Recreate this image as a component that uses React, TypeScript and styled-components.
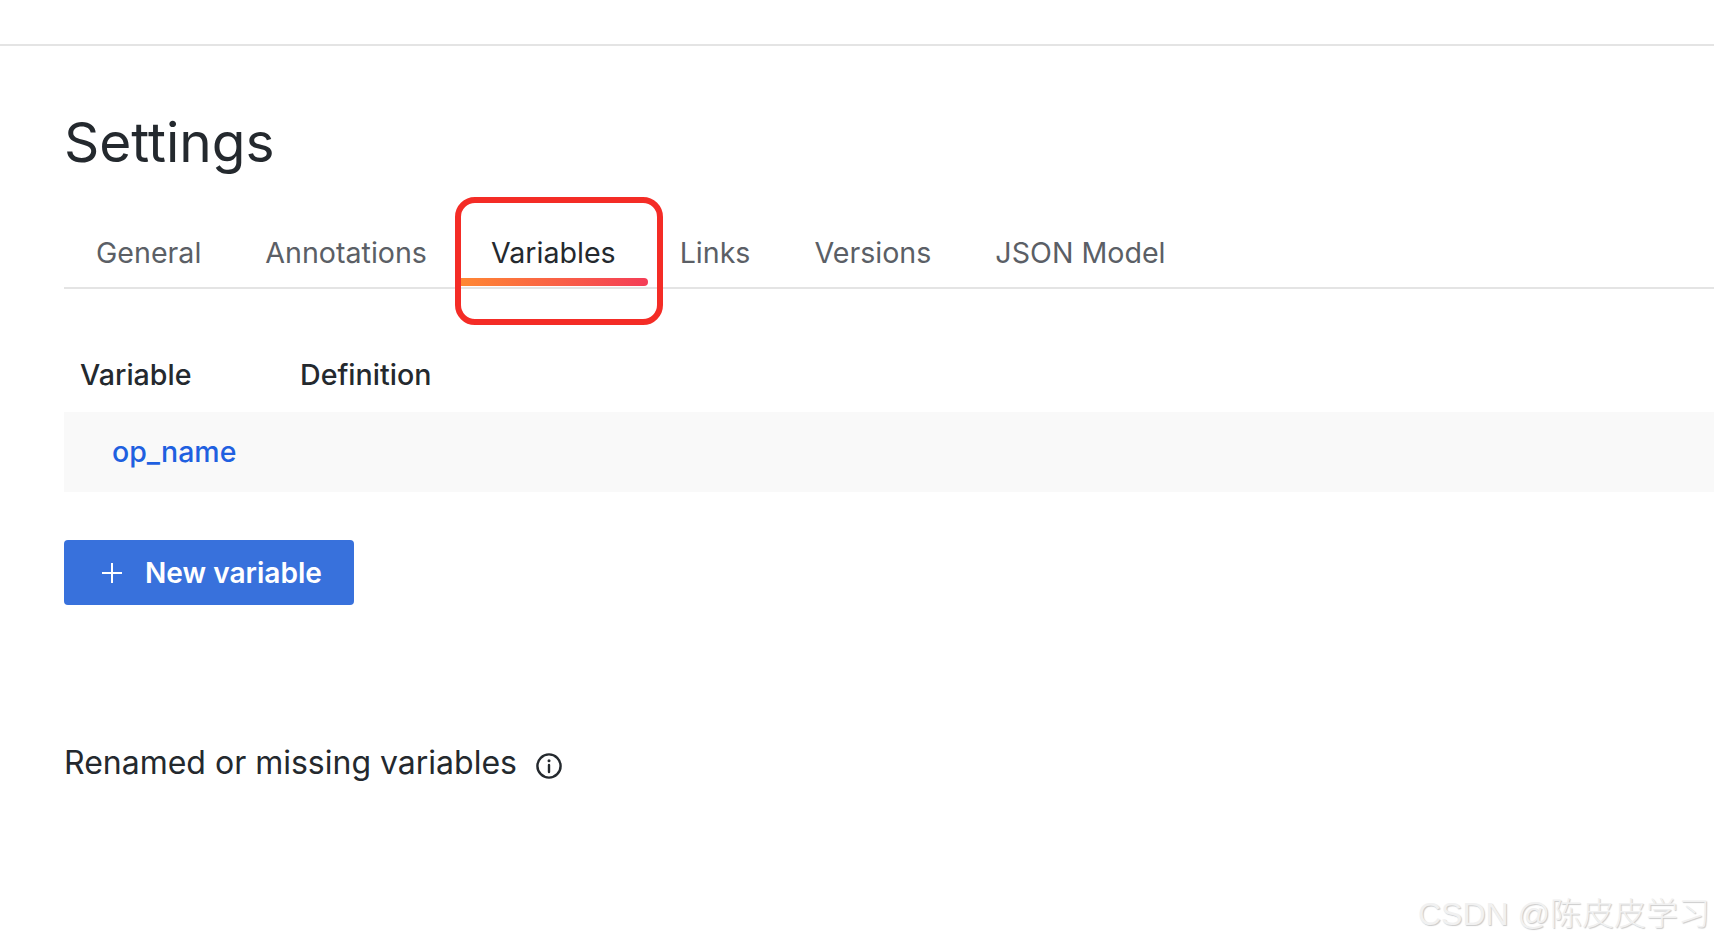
import React from "react";
import styled, { createGlobalStyle } from "styled-components";

const Global = createGlobalStyle`
  html, body { margin: 0; padding: 0; background: #fff; height: 100%; overflow: hidden; }
  body { font-family: Inter, "Liberation Sans", sans-serif; color: #24292e; -webkit-font-smoothing: antialiased; }
`;

const Page = styled.div`
  position: relative;
  height: 944px;
  overflow: hidden;
`;

const TopBar = styled.header`
  height: 44px;
  border-bottom: 2px solid #e4e4e4;
`;

const Content = styled.main`
  padding: 62px 0 0 64px;
`;

const Title = styled.h1`
  margin: 0;
  font-size: 55px;
  line-height: 68px;
  font-weight: 400;
  color: #24292e;
`;

const Tabs = styled.nav`
  display: flex;
  height: 69px;
  margin-top: 42px;
  border-bottom: 2px solid #e4e4e4;
`;

const Tab = styled.div<{ $active?: boolean }>`
  position: relative;
  padding: 17px 32px 0;
  font-size: 28.6px;
  line-height: 36px;
  color: ${(p) => (p.$active ? "#24292e" : "#5b5f66")};
  ${(p) =>
    p.$active &&
    `&::after {
      content: "";
      position: absolute;
      left: 0;
      right: 0;
      bottom: 1px;
      height: 8px;
      border-radius: 0 4px 4px 0;
      background: linear-gradient(90deg, #ff8833, #f43d57);
    }`}
`;

const Table = styled.section`
  margin-top: 67px;
`;

const HeaderRow = styled.div`
  display: flex;
  height: 56px;
  padding: 1px 0 0 16px;
  box-sizing: border-box;
`;

const HeaderCell = styled.div<{ $width?: number }>`
  width: ${(p) => (p.$width ? `${p.$width}px` : "auto")};
  font-size: 28.6px;
  line-height: 36px;
  font-weight: 500;
`;

const DataRow = styled.div`
  display: flex;
  align-items: center;
  height: 80px;
  padding-left: 48px;
  background: #f9f9f9;
`;

const VarLink = styled.a`
  font-size: 28.5px;
  line-height: 36px;
  font-weight: 500;
  color: #1f60e0;
`;

const AddButton = styled.button`
  display: flex;
  align-items: center;
  gap: 22px;
  width: 290px;
  height: 65px;
  margin-top: 48px;
  padding: 0 0 0 37px;
  border: 0;
  border-radius: 4px;
  background: #3871dc;
  color: #fff;
  font-family: inherit;
  font-size: 28.1px;
  font-weight: 600;
`;

const Missing = styled.section`
  display: flex;
  align-items: center;
  gap: 18px;
  margin-top: 134px;
  font-size: 32px;
  line-height: 48px;
`;

const InfoIcon = styled.svg`
  margin-top: 6px;
`;

const Highlight = styled.div`
  position: absolute;
  left: 455px;
  top: 197px;
  width: 208px;
  height: 128px;
  box-sizing: border-box;
  border: 6px solid #f42c26;
  border-radius: 20px;
`;

const Watermark = styled.div`
  position: absolute;
  left: 1418px;
  top: 894px;
  font-family: "Liberation Sans", "Noto Sans CJK SC", sans-serif;
  font-size: 32px;
  line-height: 40px;
  font-weight: 300;
  white-space: nowrap;
  color: #f1f1f1;
  text-shadow: 1px 1px 1px #cacaca;
`;

export default function App() {
  return (
    <Page>
      <Global />
      <TopBar />
      <Content>
        <Title>Settings</Title>
        <Tabs>
          <Tab>General</Tab>
          <Tab>Annotations</Tab>
          <Tab $active>Variables</Tab>
          <Tab>Links</Tab>
          <Tab>Versions</Tab>
          <Tab>JSON Model</Tab>
        </Tabs>
        <Table>
          <HeaderRow>
            <HeaderCell $width={220}>Variable</HeaderCell>
            <HeaderCell>Definition</HeaderCell>
          </HeaderRow>
          <DataRow>
            <VarLink>op_name</VarLink>
          </DataRow>
        </Table>
        <AddButton>
          <svg width="22" height="22" viewBox="0 0 22 22" fill="none" stroke="#fff" strokeWidth="2">
            <path d="M11 1v20M1 11h20" />
          </svg>
          New variable
        </AddButton>
        <Missing>
          Renamed or missing variables
          <InfoIcon width="28" height="28" viewBox="0 0 28 28" fill="none" stroke="#24292e" strokeWidth="2.4">
            <circle cx="14" cy="14" r="11.6" />
            <path d="M14 13v7" strokeLinecap="round" />
            <circle cx="14" cy="8.8" r="1.5" fill="#24292e" stroke="none" />
          </InfoIcon>
        </Missing>
      </Content>
      <Highlight />
      <Watermark>CSDN @陈皮皮学习</Watermark>
    </Page>
  );
}
